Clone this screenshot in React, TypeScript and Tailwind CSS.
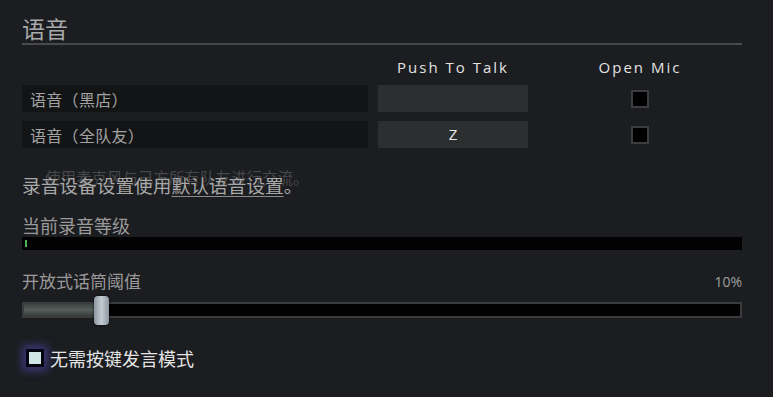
import React from 'react';

const cjk = { fontFamily: '"Noto Sans CJK SC", "Noto Sans", sans-serif' };
const latin = { fontFamily: '"Open Sans", "Noto Sans", sans-serif' };

interface VoiceRow { label: string; key: string; }

const rows: VoiceRow[] = [
  { label: '语音（黑店）', key: '' },
  { label: '语音（全队友）', key: 'Z' },
];

function Checkbox() {
  return <div className="w-[18px] h-[18px] border-2 border-[#3b3d3f] bg-black" />;
}

export default function App() {
  const threshold = 10;
  return (
    <div className="w-[773px] h-[397px] bg-[#1c1d20] overflow-hidden" style={cjk}>
      <div className="w-[720px] ml-[22px] flex flex-col">
        <h1 className="pt-[15px] text-[23px] leading-[26px] text-[#a8a9ab]">语音</h1>
        <div className="mt-[2px] h-[2px] bg-[#47494d]" />

        <div className="mt-[12px] flex h-[20px] items-center text-[15px] tracking-[2px] text-[#e2e2e2]" style={latin}>
          <div className="w-[346px]" />
          <div className="ml-[10px] w-[150px] text-center">Push To Talk</div>
          <div className="ml-[10px] flex-1 text-center">Open Mic</div>
        </div>

        <div className="mt-[8px] flex flex-col gap-[9px]">
          {rows.map(r => (
            <div key={r.label} className="flex h-[27px] items-stretch">
              <div className="w-[346px] bg-[#131415] pl-[8px] flex items-center text-[16px] tracking-[0.3px] text-[#a3a3a3]">{r.label}</div>
              <div className="ml-[10px] w-[150px] bg-[#2b2f2f] flex items-center justify-center text-[15px] text-[#e8e8e8]" style={latin}>{r.key}</div>
              <div className="ml-[10px] flex-1 flex items-center justify-center"><Checkbox /></div>
            </div>
          ))}
        </div>

        <div className="mt-[20px] pl-[23px] text-[15.5px] leading-[18px] text-[#45474a]">使用麦克风与己方所有队友进行交流。</div>
        <div className="-mt-[12px] text-[18.7px] leading-[22px] text-[#a8a8a8]">
          录音设备设置使用<span className="underline underline-offset-[3px] decoration-[#8a8a8a]">默认语音设置</span>。
        </div>

        <div className="mt-[19px] text-[18px] leading-[20px] text-[#9a9a9a]">当前录音等级</div>
        <div className="mt-[2px] h-[13px] bg-[#020202] flex items-center pl-[3px]">
          <div className="w-[2px] h-[7px] bg-[#4fb35a]" />
        </div>

        <div className="mt-[21px] flex h-[20px] items-center justify-between">
          <span className="text-[17px] leading-[20px] text-[#9a9a9a]">开放式话筒阈值</span>
          <span className="text-[14px] text-[#a0a0a0]" style={latin}>{threshold}%</span>
        </div>

        <div className="mt-[11px] relative h-[16px] border-2 border-[#3a3b3c] bg-[#020202]">
          <div className="h-full bg-gradient-to-b from-[#3c4341] via-[#56605c] to-[#353b39]" style={{ width: `${threshold}%` }} />
          <div className="absolute top-[-8px] w-[15px] h-[29px] rounded-[4px] bg-gradient-to-r from-[#8d98a2] via-[#c3cad2] to-[#8d98a2] shadow-[0_0_3px_rgba(0,0,0,0.8)]" style={{ left: `calc(${threshold}% - 2px)` }} />
        </div>

        <div className="mt-[30px] flex h-[20px] items-center">
          <div className="ml-[4px] w-[18px] h-[18px] border-[3px] border-[#050510] bg-[#cfe6e6] shadow-[0_0_9px_4px_rgba(90,78,200,0.5)]" />
          <span className="ml-[6px] text-[18px] leading-[20px] text-[#e4e4e4]">无需按键发言模式</span>
        </div>
      </div>
    </div>
  );
}
